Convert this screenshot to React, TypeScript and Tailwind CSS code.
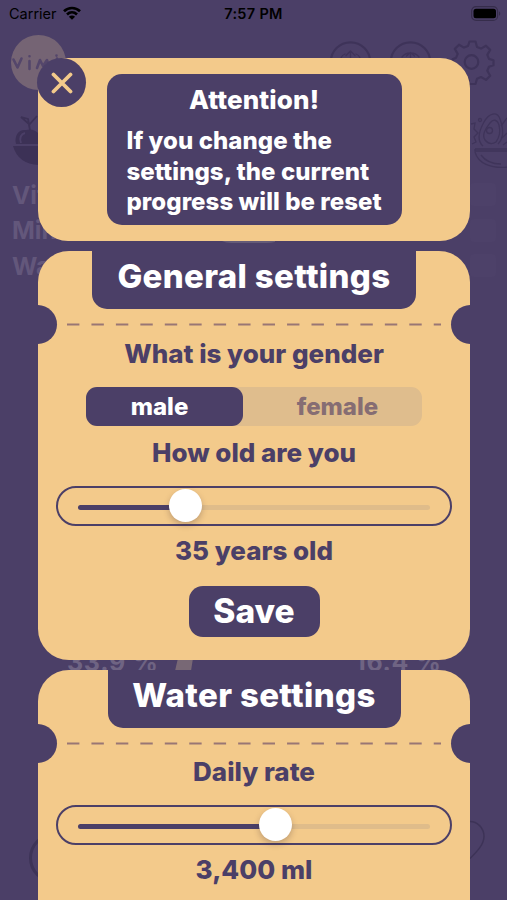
import type { ReactNode } from 'react';

interface SliderProps {
  value: number;
}

interface TicketProps {
  title: string;
  tabClass: string;
  className: string;
  children: ReactNode;
}

function Slider({ value }: SliderProps) {
  return (
    <div className="w-[396px] h-10 rounded-full border-2 border-[#4b3f67] px-5 flex items-center shrink-0">
      <div className="relative mt-[3px] w-full h-[5px] rounded-full bg-[#dfbc8a]">
        <div className="h-full rounded-full bg-[#4b3f67]" style={{ width: `${value}%` }} />
        <div
          className="absolute -top-[16px] -ml-[16px] w-[33px] h-[33px] rounded-full bg-white shadow-[0_3px_6px_rgba(60,40,50,0.28)]"
          style={{ left: `${value}%` }}
        />
      </div>
    </div>
  );
}

function TicketCard({ title, tabClass, className, children }: TicketProps) {
  return (
    <section className={`relative w-[432px] shrink-0 overflow-hidden bg-[#f3ca8b] flex flex-col items-center ${className}`}>
      <h2 className={`h-[58px] shrink-0 rounded-b-[15px] bg-[#4b3f67] text-white text-center text-[33px] leading-[51px] tracking-[0.35px] font-extrabold whitespace-nowrap ${tabClass}`}>
        {title}
      </h2>
      <svg className="mt-[14px] -ml-px shrink-0" width="374" height="3" fill="none">
        <path d="M0 1.5H374" stroke="#997674" strokeWidth="2" strokeDasharray="12.4 12.05" />
      </svg>
      <span className="absolute top-[54px] -left-5 w-[39px] h-[39px] rounded-full bg-[#4b3f67]" />
      <span className="absolute top-[54px] -right-5 w-[39px] h-[39px] rounded-full bg-[#4b3f67]" />
      {children}
    </section>
  );
}

function StatusBar() {
  return (
    <header className="grid grid-cols-3 items-center h-[27px] shrink-0 pl-[9px] pr-[6px] text-black text-[14.5px]">
      <div className="flex items-center gap-[6px]">
        <span>Carrier</span>
        <svg className="-mt-[2px]" width="18" height="14" viewBox="0 0 18 14" fill="none" stroke="#000" strokeWidth="2.7">
          <path d="M1 5.2C5.5.9 12.5.9 17 5.2" />
          <path d="M4 8.4c2.9-2.7 7.1-2.7 10 0" />
          <path d="M9 13.8 5.9 10.7c1.8-1.7 4.4-1.7 6.2 0z" fill="#000" stroke="none" />
        </svg>
      </div>
      <span className="-ml-[3px] text-center font-semibold tracking-[0.3px]">7:57 PM</span>
      <svg className="justify-self-end -mt-px" width="30" height="15" viewBox="0 0 30 15">
        <rect x=".6" y=".6" width="26" height="13.8" rx="4.5" fill="none" stroke="#362d4b" strokeWidth="1.2" />
        <rect x="2.5" y="2.7" width="22.5" height="9.6" rx="2.5" fill="#000" />
        <path d="M28 5.2c1.7.8 1.7 3.8 0 4.6z" fill="#362d4b" />
      </svg>
    </header>
  );
}

// Dimmed home screen that shows around the settings cards
function HomeBackdrop() {
  return (
    <svg className="absolute inset-0" width="507" height="900" fill="none">
      <circle cx="38.5" cy="62.5" r="27.5" fill="#756474" />
      <g stroke="#54466b" strokeWidth="2.6" strokeLinecap="round" strokeLinejoin="round">
        <path d="m13.500 59.500 4 8 4-9M29.500 61v8M37 68l3-8 3 6 4-6 1.500 5M57 58.500v5" />
        <path d="M29.500 56.200v.1M56.500 55.500v.1" />
      </g>

      <g stroke="#3e3359" strokeWidth="2.2" strokeLinecap="round" strokeLinejoin="round">
        <circle cx="350.500" cy="62" r="19.700" />
        <path d="M350.500 64V51m-4.500 4.500 4.500-4.500 4.500 4.500M341 58q1-3 4-4m11 0q3 1 4 4" strokeWidth="1.3" />
        <circle cx="410.500" cy="62" r="19.700" />
        <path d="M410.500 64V52.500m-4 3.500 4-3.500 4 3.500M402 57q3-4 8.500-4t8.500 4" strokeWidth="1.3" />
        <path d="m469.500 41.500h6l1.500 5.500 4 1.600 5-2.900 4.200 4.200-2.900 5 1.700 4 4.500 1.300v5l-4.500 1.500-1.700 4 2.900 5-4.200 4.200-5-2.900-4 1.700-1.500 5.300h-6l-1.500-5.300-4-1.700-5 2.900-4.200-4.200 2.900-5-1.700-4-3.500-1.500v-6l3.500-1.300 1.700-4-2.900-5 4.200-4.200 5 2.900 4-1.600z" />
        <circle cx="471.500" cy="62" r="6.800" />
      </g>

      <path d="M13 146h26v19q-21-1-26-19zM16 144c-2-9 3-15 10-14q7-2 12 3v11z" fill="#3c3156" />
      <path d="m30 130-1-5 8-9M29 124l-8-7 7 2z" stroke="#3c3156" strokeWidth="1.8" />
      <path d="M21 143c-2-5 0-9 4-10" stroke="#4b3f67" strokeWidth="2" />

      <g stroke="#3f345a" strokeWidth="1.3">
        <path d="M475 149h34M475 149v2h34M475 152c3 11 15 17 34 15M481 155c5 7 12 9 20 9" />
        <path d="M483 146c-7-6-4-15 1-24 5-9 13-11 16-3 4 11 3 20-2 25M485 140c-4-6 2-13 5-17 3-4 7-4 9 2 2 8 0 13-3 17q-6 4-11-2z" />
        <circle cx="489.500" cy="130.500" r="3" />
        <circle cx="480" cy="120" r="1.500" />
        <path d="m471 124 4-1-1 6 4 4-4 4 2 5-4 2M501 126l6-8M502 138l5-5M503 145l4-3" />
      </g>

      <g fill="#63577b" fontSize="24.500" fontWeight="700">
        <text x="12" y="204">Vit</text>
        <text x="12" y="239">Min</text>
        <text x="12" y="275">Wat</text>
      </g>
      <g fill="#6f6483" fontSize="25" fontWeight="700">
        <text x="67" y="671" textLength="91">33.9 %</text>
        <text x="355" y="671" textLength="86">16.4 %</text>
      </g>
      <path d="m178 658h15l-2 13h-16z" fill="#786875" />
      <path d="M222 241h53v1q-4 1-8 1h-36q-5 0-9-2z" fill="#655b77" />
      <g fill="#4d4169">
        <rect x="470" y="183" width="26" height="23" rx="4" />
        <rect x="470" y="219" width="26" height="23" rx="4" />
        <rect x="470" y="254" width="26" height="23" rx="4" />
      </g>

      <circle cx="54" cy="858" r="23.500" stroke="#3d3357" strokeWidth="3" />
      <path d="M470 821.500c7 0 14 6 14 15 0 8-7 15-14 22" stroke="#3d3357" strokeWidth="1.500" />
    </svg>
  );
}

export default function App() {
  return (
    <div className="relative w-[507px] h-[900px] overflow-hidden bg-[#4b3f67] font-['Inter',sans-serif] [font-optical-sizing:none] [font-feature-settings:'calt'_0]">
      <HomeBackdrop />

      <main className="relative h-full flex flex-col">
        <StatusBar />

        <div className="mt-[31px] ml-[38px] flex flex-col gap-[10px]">
          <section className="relative w-[432px] h-[183px] shrink-0 rounded-[30px] bg-[#f3ca8b] pt-4">
            <button className="absolute top-0 -left-px w-[49px] h-[49px] rounded-full bg-[#4b3f67] flex items-center justify-center" aria-label="Close">
              <svg width="22" height="22" viewBox="0 0 22 22" stroke="#f3ca8b" strokeWidth="3.8" strokeLinecap="round">
                <path d="m2.500 2.500 17 17M19.500 2.500l-17 17" />
              </svg>
            </button>
            <div className="ml-[68.500px] w-[295px] h-[151px] rounded-[15px] bg-[#4b3f67] text-white pt-[11px]">
              <h1 className="text-center text-[26px] leading-[30px] tracking-[0.1px] font-extrabold">Attention!</h1>
              <p className="mt-[11px] pl-5 text-[24px] leading-[30.5px] tracking-[0.06px] font-extrabold whitespace-nowrap">
                If you change the
                <br />
                settings, the current
                <br />
                progress will be reset
              </p>
            </div>
          </section>

          <TicketCard title="General settings" tabClass="w-[324px]" className="h-[409px] rounded-[31px]">
            <h3 className="mt-[13px] text-[#4b3f67] text-[26px] leading-[30px] font-extrabold">What is your gender</h3>
            <div className="mt-[18px] flex w-[336px] h-[39px] rounded-[11px] bg-[#dfbd8d] text-[24px] leading-[39px] font-extrabold text-center shrink-0">
              <button className="w-[157px] pr-[10px] rounded-[11px] bg-[#4b3f67] text-white">male</button>
              <button className="flex-1 pl-[10px] text-[#866d73]">female</button>
            </div>
            <h3 className="mt-[12px] text-[#4b3f67] text-[26px] leading-[30px] font-extrabold">How old are you</h3>
            <div className="mt-[18px]">
              <Slider value={30.4} />
            </div>
            <p className="mt-[10px] text-[#4b3f67] text-[26px] leading-[30px] font-extrabold">35 years old</p>
            <button className="mt-5 w-[131px] h-[51px] shrink-0 rounded-[14px] bg-[#4b3f67] text-white text-[33.5px] leading-[51px] font-extrabold">
              Save
            </button>
          </TicketCard>

          <TicketCard title="Water settings" tabClass="w-[293px]" className="h-[260px] rounded-t-[31px]">
            <h3 className="mt-[12px] text-[#4b3f67] text-[26px] leading-[30px] font-extrabold">Daily rate</h3>
            <div className="mt-[18px]">
              <Slider value={56} />
            </div>
            <p className="mt-[10px] text-[#4b3f67] text-[26px] leading-[30px] font-extrabold">3,400 ml</p>
          </TicketCard>
        </div>
      </main>
    </div>
  );
}
